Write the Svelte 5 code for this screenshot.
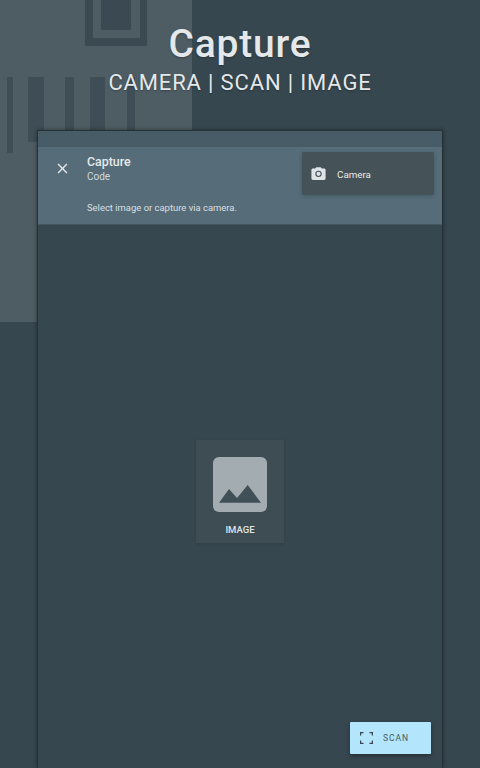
<script>
    const bars = [
        { x: 7, w: 6, h: 76 },
        { x: 28, w: 16, h: 65 },
        { x: 65, w: 9, h: 60 },
        { x: 90, w: 15, h: 60 },
        { x: 127, w: 8, h: 60 }
    ];
</script>

<div class="screen">
    <div class="deco">
        <div class="ring"><div class="ring-inner"><div class="ring-core"></div></div></div>
        {#each bars as bar}
            <div class="bar" style="left: {bar.x}px; width: {bar.w}px; height: {bar.h}px;"></div>
        {/each}
    </div>

    <header class="hero">
        <h1>Capture</h1>
        <p>CAMERA | SCAN | IMAGE</p>
    </header>

    <main class="frame">
        <div class="strip"></div>
        <section class="info">
            <div class="info-top">
                <svg class="close" viewBox="0 0 24 24" width="17" height="17">
                    <path d="M19 6.41 17.59 5 12 10.59 6.41 5 5 6.41 10.59 12 5 17.59 6.41 19 12 13.41 17.59 19 19 17.59 13.41 12z" fill="#e4e9eb" />
                </svg>
                <div class="titles">
                    <div class="title">Capture</div>
                    <div class="sub">Code</div>
                </div>
                <button class="camera">
                    <svg viewBox="0 0 24 24" width="17" height="17">
                        <path fill="#dfe4e6" fill-rule="evenodd" d="M9 3 7.170 5H4c-1.100 0-2 .9-2 2v12c0 1.100.9 2 2 2h16c1.100 0 2-.9 2-2V7c0-1.100-.9-2-2-2h-3.170L15 3H9zm3 14a4.500 4.500 0 1 1 0-9 4.500 4.500 0 0 1 0 9zm0-1.500a3 3 0 1 0 0-6 3 3 0 0 0 0 6z" />
                    </svg>
                    <span>Camera</span>
                </button>
            </div>
            <div class="hint">Select image or capture via camera.</div>
        </section>

        <div class="body">
            <button class="tile">
                <svg viewBox="0 0 54 55" width="54" height="55">
                    <rect width="54" height="55" rx="6" fill="#a3adb1" />
                    <path d="M6 45.700 16 32 24 41 34.700 28 48 45.700z" fill="#414f57" />
                </svg>
                <span>IMAGE</span>
            </button>
        </div>

        <button class="scan">
            <svg viewBox="0 0 13 12" width="13" height="12" fill="none" stroke="#37474f" stroke-width="1.200">
                <path d="M.6 3.500V.6h2.900M9.500.6h2.900v2.900M12.400 8.500v2.900H9.500M3.500 11.400H.6V8.500" />
            </svg>
            <span>SCAN</span>
        </button>
    </main>
</div>

<style>
    :global(body) {
        background: #37474f;
    }
    .screen {
        position: relative;
        display: flex;
        flex-direction: column;
        align-items: center;
        height: 768px;
        overflow: hidden;
        background: #37474f;
        font-family: Roboto, "Liberation Sans", sans-serif;
    }
    .deco {
        position: absolute;
        left: 0;
        top: 0;
        width: 192px;
        height: 322px;
        background: #4e5d64;
    }
    .ring {
        position: absolute;
        left: 85px;
        top: 0;
        width: 62px;
        height: 46px;
        background: #3b4a52;
    }
    .ring-inner {
        margin: 0 auto;
        width: 47px;
        height: 38px;
        background: #4e5d64;
    }
    .ring-core {
        margin: 0 auto;
        width: 30px;
        height: 30px;
        background: #3b4a52;
    }
    .bar {
        position: absolute;
        top: 77px;
        background: #3f4e56;
    }
    .hero {
        position: relative;
        height: 130px;
        width: 100%;
        text-align: center;
        color: #e4e8ea;
        text-shadow: 0 1px 2px rgba(0, 0, 0, 0.3);
    }
    h1 {
        margin: 0;
        padding-top: 23px;
        font-size: 39px;
        line-height: 43px;
        font-weight: 500;
        letter-spacing: 0.8px;
    }
    .hero p {
        margin: 0;
        padding-top: 2px;
        font-size: 22px;
        line-height: 30px;
        letter-spacing: 0.85px;
    }
    .frame {
        position: relative;
        display: flex;
        flex-direction: column;
        box-sizing: border-box;
        width: 406px;
        flex: 1;
        background: #37474f;
        border: 1px solid #263238;
        border-bottom: 0;
        box-shadow: 0 0 4px rgba(0, 0, 0, 0.45);
    }
    .strip {
        height: 16px;
        background: #475c66;
    }
    .info {
        height: 78px;
        box-sizing: border-box;
        background: #566d79;
        border-bottom: 1px solid #46565e;
        color: #e4e9eb;
    }
    .info-top {
        display: flex;
        align-items: flex-start;
        height: 48px;
        padding: 5px 8px 0 16px;
    }
    .close {
        margin-top: 8px;
    }
    .titles {
        margin-left: 16px;
        flex: 1;
        padding-top: 2px;
    }
    .title {
        font-size: 12.4px;
        line-height: 16px;
        font-weight: 500;
    }
    .sub {
        font-size: 10px;
        line-height: 13px;
        color: #cfd8dc;
    }
    .camera {
        display: flex;
        align-items: center;
        gap: 10px;
        width: 132px;
        height: 43px;
        box-sizing: border-box;
        padding: 0 0 0 8px;
        border: 0;
        border-radius: 1px;
        background: #455258;
        box-shadow: 0 1px 4px rgba(0, 0, 0, 0.2);
        color: #e4e9eb;
        font: 400 9.8px Roboto, sans-serif;
    }
    .camera span {
        padding-top: 1px;
    }
    .hint {
        padding: 1px 0 0 49px;
        font-size: 9.45px;
        line-height: 13px;
        color: #d8dfe2;
    }
    .body {
        flex: 1;
        display: flex;
        justify-content: center;
        padding-top: 215px;
    }
    .tile {
        display: flex;
        flex-direction: column;
        align-items: center;
        width: 88px;
        height: 103px;
        box-sizing: border-box;
        padding: 17px 0 0;
        border: 0;
        background: #3e4c54;
        box-shadow: 0 1px 3px rgba(0, 0, 0, 0.15);
        color: #e0e5e7;
        font: 500 9.5px Roboto, sans-serif;
    }
    .tile span {
        margin-top: 12px;
        line-height: 12px;
    }
    .scan {
        position: absolute;
        left: 312px;
        top: 591px;
        display: flex;
        align-items: center;
        gap: 10px;
        width: 81px;
        height: 32px;
        box-sizing: border-box;
        padding: 0 0 0 10px;
        border: 0;
        border-radius: 1px;
        background: #b3e5fc;
        box-shadow: 0 2px 4px rgba(0, 0, 0, 0.35);
        color: #455a64;
        font: 400 8.5px Roboto, sans-serif;
        letter-spacing: 1px;
    }
</style>
